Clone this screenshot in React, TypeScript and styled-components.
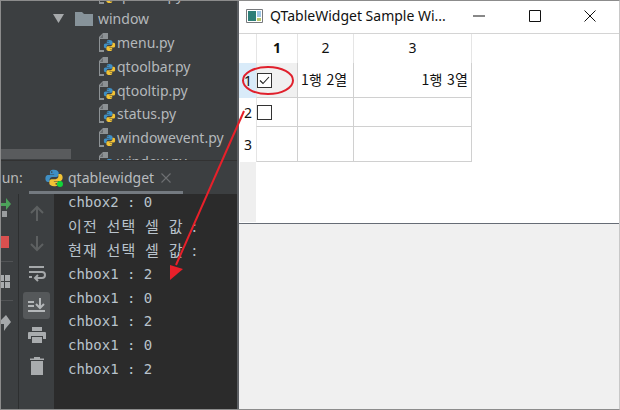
import React, { FC } from 'react';
import styled, { createGlobalStyle } from 'styled-components';

const GlobalStyle = createGlobalStyle`
  html, body {
    margin: 0;
    padding: 0;
    background: #f0f0f0;
  }
`;

const Shot = styled.div`
  position: relative;
  display: flex;
  width: 620px;
  height: 410px;
  box-sizing: border-box;
  border: 1px solid #8c8c8c;
  border-right-color: #c8c8c8;
  overflow: hidden;
  font-family: "Noto Sans", "Noto Sans CJK KR", sans-serif;
`;

/* ---------- IDE side ---------- */
const Ide = styled.div`
  width: 236px;
  display: flex;
  flex-direction: column;
  background: #3c3f41;
  color: #bbbbbb;
  flex-shrink: 0;
`;

const ProjectPanel = styled.div`
  position: relative;
  height: 159px;
  overflow: hidden;
  border-bottom: 1px solid #323232;
`;

const Tree = styled.div`
  display: flex;
  flex-direction: column;
  margin-top: -18px;
`;

const TreeRow = styled.div<{ $indent: number }>`
  display: flex;
  align-items: center;
  height: 23.8px;
  flex-shrink: 0;
  padding-left: ${({ $indent }) => $indent}px;
  font-size: 14px;
  gap: 1px;
  color: #b4b8bb;
`;

const FolderName = styled.span`
  margin-left: 4px;
`;

const HScroll = styled.div`
  position: absolute;
  left: 0;
  top: 148px;
  width: 70px;
  height: 10px;
  background: #595b5d;
`;

const RunBar = styled.div`
  position: relative;
  height: 33px;
  display: flex;
  align-items: center;
  flex-shrink: 0;
  padding-left: 1px;
  background: #3c3f41;
  font-size: 14px;
`;

const RunLabel = styled.span`
  width: 43px;
  color: #b8b8b8;
  overflow: hidden;
  text-indent: -9px;
  white-space: nowrap;
`;

const RunTab = styled.div`
  display: flex;
  align-items: center;
  gap: 5px;
  font-size: 14px;
  color: #b8bcbf;
`;

const TabUnderline = styled.div`
  position: absolute;
  left: 28px;
  bottom: 0;
  width: 154px;
  height: 3px;
  background: #747a80;
`;

const CloseMark = styled.span`
  display: flex;
  margin-left: 2px;
  color: #6e7072;
`;

const RunBody = styled.div`
  flex: 1;
  display: flex;
  min-height: 0;
`;

const OuterStrip = styled.div`
  width: 17px;
  border-right: 1px solid #2d2f30;
  display: flex;
  flex-direction: column;
  flex-shrink: 0;
  overflow: hidden;
`;

const StripIcon = styled.div<{ $height: number }>`
  height: ${({ $height }) => $height}px;
  display: flex;
  align-items: center;
`;

const StripRule = styled.div`
  width: 12px;
  height: 1px;
  background: #515355;
`;

const ToolStrip = styled.div`
  width: 35px;
  display: flex;
  flex-direction: column;
  align-items: center;
  flex-shrink: 0;
  padding-top: 4px;
  box-sizing: border-box;
`;

const ToolButton = styled.div<{ $active?: boolean }>`
  width: 27px;
  height: ${({ $active }) => ($active ? '27px' : '30.6px')};
  margin: ${({ $active }) => ($active ? '1.8px 0' : '0')};
  display: flex;
  align-items: center;
  justify-content: center;
  border-radius: 3px;
  background: ${({ $active }) => ($active ? '#55585a' : 'transparent')};
`;

const Console = styled.div`
  flex: 1;
  background: #2b2b2b;
  padding: 0 0 0 14px;
  font-family: "DejaVu Sans Mono", "Noto Sans CJK KR", monospace;
  font-size: 14px;
  color: #b9c3cc;
  overflow: hidden;
`;

const ConsoleLines = styled.div`
  margin-top: -3px;
`;

const ConsoleLine = styled.div`
  height: 23.9px;
  line-height: 23.9px;
  white-space: pre;
`;

const KoreanLine = styled(ConsoleLine)`
  font-family: "Noto Sans CJK KR", monospace;
  font-size: 15px;
  line-height: 22px;
  word-spacing: 4px;
  letter-spacing: 1.2px;
`;

/* ---------- Qt window side ---------- */
const QtWindow = styled.div`
  flex: 1;
  display: flex;
  flex-direction: column;
  border-left: 2px solid #5d6064;
  background: #f0f0f0;
`;

const TitleBar = styled.div`
  height: 33px;
  box-sizing: border-box;
  padding-bottom: 3px;
  display: flex;
  align-items: center;
  background: #ffffff;
  border-bottom: 1px solid #d4d4d4;
  flex-shrink: 0;
`;

const WindowIcon = styled.div`
  display: flex;
  margin-left: 7px;
  margin-right: 7px;
`;

const TitleText = styled.div`
  width: 180px;
  font-size: 14px;
  color: #111111;
  white-space: nowrap;
`;

const TitleButtons = styled.div`
  display: flex;
  margin-left: auto;
  margin-right: 1px;
`;

const TitleButton = styled.div`
  width: 55.5px;
  display: flex;
  justify-content: center;
  align-items: center;
  height: 28px;
`;

const TableFrame = styled.div`
  height: 189px;
  display: flex;
  background: #ffffff;
  border-bottom: 1px solid #666c75;
  flex-shrink: 0;
`;

const VHeader = styled.div`
  width: 17px;
  display: flex;
  flex-direction: column;
  flex-shrink: 0;
`;

const HeaderCorner = styled.div`
  height: 29px;
`;

const VHeaderCell = styled.div<{ $height: number; $current?: boolean }>`
  height: ${({ $height }) => $height}px;
  display: flex;
  align-items: center;
  justify-content: center;
  font-size: 14px;
  color: #111111;
  padding-left: 1px;
  box-sizing: border-box;
  background: ${({ $current }) => ($current ? '#d9ebf9' : '#ffffff')};
`;

const HeaderFiller = styled.div`
  flex: 1;
  margin: 0 0 1px 1px;
  background: #efefef;
`;

const Grid = styled.div`
  display: grid;
  grid-template-columns: 42px 56px 118px;
  grid-template-rows: 29px 35px 29px 35px;
  align-self: flex-start;
  font-size: 14px;
  color: #111111;
`;

const HCell = styled.div<{ $bold?: boolean }>`
  display: flex;
  align-items: center;
  justify-content: center;
  padding-bottom: 2px;
  box-sizing: border-box;
  border-right: 1px solid #e5e5e5;
  border-left: ${({ $bold }) => ($bold ? '1px solid #e5e5e5' : 'none')};
  font-weight: ${({ $bold }) => ($bold ? 700 : 400)};
`;

const Cell = styled.div<{ $align?: 'left' | 'right'; $selected?: boolean; $first?: boolean }>`
  display: flex;
  align-items: center;
  box-sizing: border-box;
  padding: ${({ $first }) => ($first ? '0' : '0 3px 2px')};
  justify-content: ${({ $align }) => ($align === 'right' ? 'flex-end' : 'flex-start')};
  border-right: 1px solid #d0d0d0;
  border-bottom: 1px solid #d0d0d0;
  border-left: ${({ $first }) => ($first ? '1px solid #e5e5e5' : 'none')};
  background: ${({ $selected }) => ($selected ? '#f0f0f0' : '#ffffff')};
`;

const KoreanText = styled.span`
  font-family: "Noto Sans CJK KR", sans-serif;
  font-size: 14px;
  word-spacing: 1px;
  letter-spacing: 0.2px;
`;

const CheckBox = styled.div`
  width: 15px;
  height: 15px;
  box-sizing: border-box;
  border: 1px solid #333333;
  background: #ffffff;
  display: flex;
  align-items: center;
  justify-content: center;
`;

const Overlay = styled.svg`
  position: absolute;
  left: -1px;
  top: -1px;
  pointer-events: none;
`;

/* ---------- drawings ---------- */
const PythonGlyph: FC<{ size?: number; running?: boolean }> = ({ size = 12, running }) => (
  <svg width={size} height={size} viewBox="0 0 24 24">
    <path fill="#3f8fc4" d="M11.8 1C7 1 6.6 3 6.6 4.6V7.2h5.6V8H3.9C1.9 8 .5 9.8.5 12.6c0 3 1.4 4.7 3.4 4.7h2.2v-3c0-2 1.8-3.8 3.8-3.800h5.300c1.700 0 3-1.400 3-3.100V4.600C17.400 2.800 15.700 1 11.800 1zM9 3a1.100 1.100 0 1 1 0 2.200A1.100 1.100 0 0 1 9 3z" />
    <path fill="#f2c335" d="M12.200 23c4.800 0 5.200-2 5.200-3.600v-2.600h-5.600V16h8.300c2 0 3.400-1.800 3.400-4.600 0-3-1.400-4.700-3.400-4.700h-2.200v3c0 2-1.800 3.800-3.800 3.800H8.800c-1.700 0-3 1.400-3 3.100v2.800C5.800 21.200 8.300 23 12.200 23zM15 21a1.100 1.100 0 1 1 0-2.200A1.100 1.100 0 0 1 15 21z" />
    {running && <circle cx="20" cy="20" r="4" fill="#12d43a" />}
  </svg>
);

const PyFileIcon: FC = () => (
  <svg width="17" height="19" viewBox="0 0 17 19">
    <path fill="#8d9295" d="M4 0h5v6H1v11h4v2H0V4z" />
    <path fill="#6a6e71" d="M4 1v4H1z" />
    <g transform="translate(4.500 6.500)">
      <PythonGlyph size={12} />
    </g>
  </svg>
);

const FileRow: FC<{ name: string }> = ({ name }) => (
  <TreeRow $indent={98}>
    <PyFileIcon />
    {name}
  </TreeRow>
);

const outputs = ['chbox1 : 2', 'chbox1 : 0', 'chbox1 : 2', 'chbox1 : 0', 'chbox1 : 2'];

const App: FC = () => (
  <>
    <GlobalStyle />
    <Shot>
      <Ide>
        <ProjectPanel>
          <Tree>
            <FileRow name="qtmain.py" />
            <TreeRow $indent={52}>
              <svg width="11" height="9" viewBox="0 0 11 9" style={{ marginRight: 10 }}>
                <path fill="#a6a9ab" d="M0 0h11L5.500 9z" />
              </svg>
              <svg width="18" height="14" viewBox="0 0 18 14">
                <path fill="#87939a" d="M0 0h7l2 2h9v12H0z" />
              </svg>
              <FolderName>window</FolderName>
            </TreeRow>
            <FileRow name="menu.py" />
            <FileRow name="qtoolbar.py" />
            <FileRow name="qtooltip.py" />
            <FileRow name="status.py" />
            <FileRow name="windowevent.py" />
            <FileRow name="window.py" />
          </Tree>
          <HScroll />
        </ProjectPanel>
        <RunBar>
          <RunLabel>Run:</RunLabel>
          <RunTab>
            <PythonGlyph size={18} running />
            qtablewidget
            <CloseMark>
              <svg width="10" height="10" viewBox="0 0 10 10">
                <path stroke="currentColor" strokeWidth="1.100" d="M.5.500l9 9M9.500.500l-9 9" />
              </svg>
            </CloseMark>
          </RunTab>
          <TabUnderline />
        </RunBar>
        <RunBody>
          <OuterStrip>
            <StripIcon $height={28}>
              <svg width="11" height="22" viewBox="0 0 11 22">
                <path fill="#4ca35a" d="M0 6h5V1l5 6-5 6V9H0z" />
                <path fill="#9a9d9f" d="M1 14h5v6H1z" />
              </svg>
            </StripIcon>
            <StripIcon $height={39}>
              <svg width="8" height="12" viewBox="0 0 8 12">
                <path fill="#d9504f" d="M0 0h8v12H0z" />
              </svg>
            </StripIcon>
            <StripRule />
            <StripIcon $height={38}>
              <svg width="9" height="13" viewBox="0 0 9 13">
                <path fill="#a9acae" d="M0 0h3v6H0zM4 0h5v6H4zM0 7h3v6H0zM4 7h5v6H4z" />
              </svg>
            </StripIcon>
            <StripRule />
            <StripIcon $height={44}>
              <svg width="10" height="16" viewBox="0 0 10 16">
                <path fill="#a5a8aa" d="M0 5l5-5 5 7-5 6-2 3V9H0z" />
              </svg>
            </StripIcon>
          </OuterStrip>
          <ToolStrip>
            <ToolButton>
              <svg width="14" height="16" viewBox="0 0 14 16" fill="none" stroke="#5d6061" strokeWidth="2">
                <path d="M7 16V2M1 8l6-6 6 6" />
              </svg>
            </ToolButton>
            <ToolButton>
              <svg width="14" height="16" viewBox="0 0 14 16" fill="none" stroke="#5d6061" strokeWidth="2">
                <path d="M7 0v14M1 8l6 6 6-6" />
              </svg>
            </ToolButton>
            <ToolButton>
              <svg width="18" height="16" viewBox="0 0 18 16" fill="none" stroke="#a5a8aa" strokeWidth="2">
                <path d="M1 1h15M1 6h13a2.500 2.500 0 0 1 0 6H8M1 11h3M10 9l-3 3 3 3" />
              </svg>
            </ToolButton>
            <ToolButton $active>
              <svg width="18" height="14" viewBox="0 0 18 14" fill="none" stroke="#b4b7b9" strokeWidth="2">
                <path d="M0 4h6M0 8h6M0 13h17M12 0v9M8 6l4 4 4-4" />
              </svg>
            </ToolButton>
            <ToolButton>
              <svg width="18" height="17" viewBox="0 0 18 17" fill="#a9acae">
                <path d="M4 0h10v4H4zM1 5h16a1 1 0 0 1 1 1v6h-3V9H3v3H0V6a1 1 0 0 1 1-1zM4 10h10v6H4z" />
              </svg>
            </ToolButton>
            <ToolButton>
              <svg width="14" height="18" viewBox="0 0 14 18" fill="#a9acae">
                <path d="M4 0h6v1.500h4V3H0V1.500h4zM1 4h12v14H1z" />
              </svg>
            </ToolButton>
          </ToolStrip>
          <Console>
            <ConsoleLines>
              <ConsoleLine>chbox2 : 0</ConsoleLine>
              <KoreanLine>이전 선택 셀 값 :</KoreanLine>
              <KoreanLine>현재 선택 셀 값 :</KoreanLine>
              {outputs.map((line, i) => (
                <ConsoleLine key={i}>{line}</ConsoleLine>
              ))}
            </ConsoleLines>
          </Console>
        </RunBody>
      </Ide>
      <QtWindow>
        <TitleBar>
          <WindowIcon>
            <svg width="17" height="14" viewBox="0 0 17 14">
              <path fill="#ffffff" stroke="#77797c" d="M.5.500h16v13H.5z" />
              <path fill="#2e7f78" d="M2 2h8v10H2z" />
              <path fill="#9fc7e6" d="M11 2h4v6h-4z" />
              <path fill="#b9c76a" d="M11 9h4v3h-4z" />
            </svg>
          </WindowIcon>
          <TitleText>QTableWidget Sample Wi...</TitleText>
          <TitleButtons>
            <TitleButton>
              <svg width="12" height="2" viewBox="0 0 12 2">
                <path stroke="#111" d="M0 1h12" />
              </svg>
            </TitleButton>
            <TitleButton>
              <svg width="12" height="12" viewBox="0 0 12 12">
                <path fill="none" stroke="#111" d="M.5.500h11v11H.5z" />
              </svg>
            </TitleButton>
            <TitleButton>
              <svg width="12" height="12" viewBox="0 0 12 12">
                <path stroke="#111" d="M.5.500l11 11M11.500.500l-11 11" />
              </svg>
            </TitleButton>
          </TitleButtons>
        </TitleBar>
        <TableFrame>
          <VHeader>
            <HeaderCorner />
            <VHeaderCell $height={35} $current>1</VHeaderCell>
            <VHeaderCell $height={29}>2</VHeaderCell>
            <VHeaderCell $height={35}>3</VHeaderCell>
            <HeaderFiller />
          </VHeader>
          <Grid>
            <HCell $bold>1</HCell>
            <HCell>2</HCell>
            <HCell>3</HCell>
            <Cell $first $selected>
              <CheckBox>
                <svg width="11" height="9" viewBox="0 0 11 9" fill="none" stroke="#222" strokeWidth="1.100">
                  <path d="M1 4.500l3 3L10 1" />
                </svg>
              </CheckBox>
            </Cell>
            <Cell><KoreanText>1행 2열</KoreanText></Cell>
            <Cell $align="right"><KoreanText>1행 3열</KoreanText></Cell>
            <Cell $first><CheckBox /></Cell>
            <Cell />
            <Cell />
            <Cell $first />
            <Cell />
            <Cell />
          </Grid>
        </TableFrame>
      </QtWindow>
      <Overlay width="620" height="410" viewBox="0 0 620 410">
        <ellipse cx="268" cy="80.500" rx="25" ry="13.500" fill="none" stroke="#e0202c" strokeWidth="2" />
        <path d="M244 111L176 265" stroke="#e8202a" strokeWidth="2" fill="none" />
        <path d="M170 265L183 269L170 280z" fill="#e8202a" />
      </Overlay>
    </Shot>
  </>
);

export default App;
